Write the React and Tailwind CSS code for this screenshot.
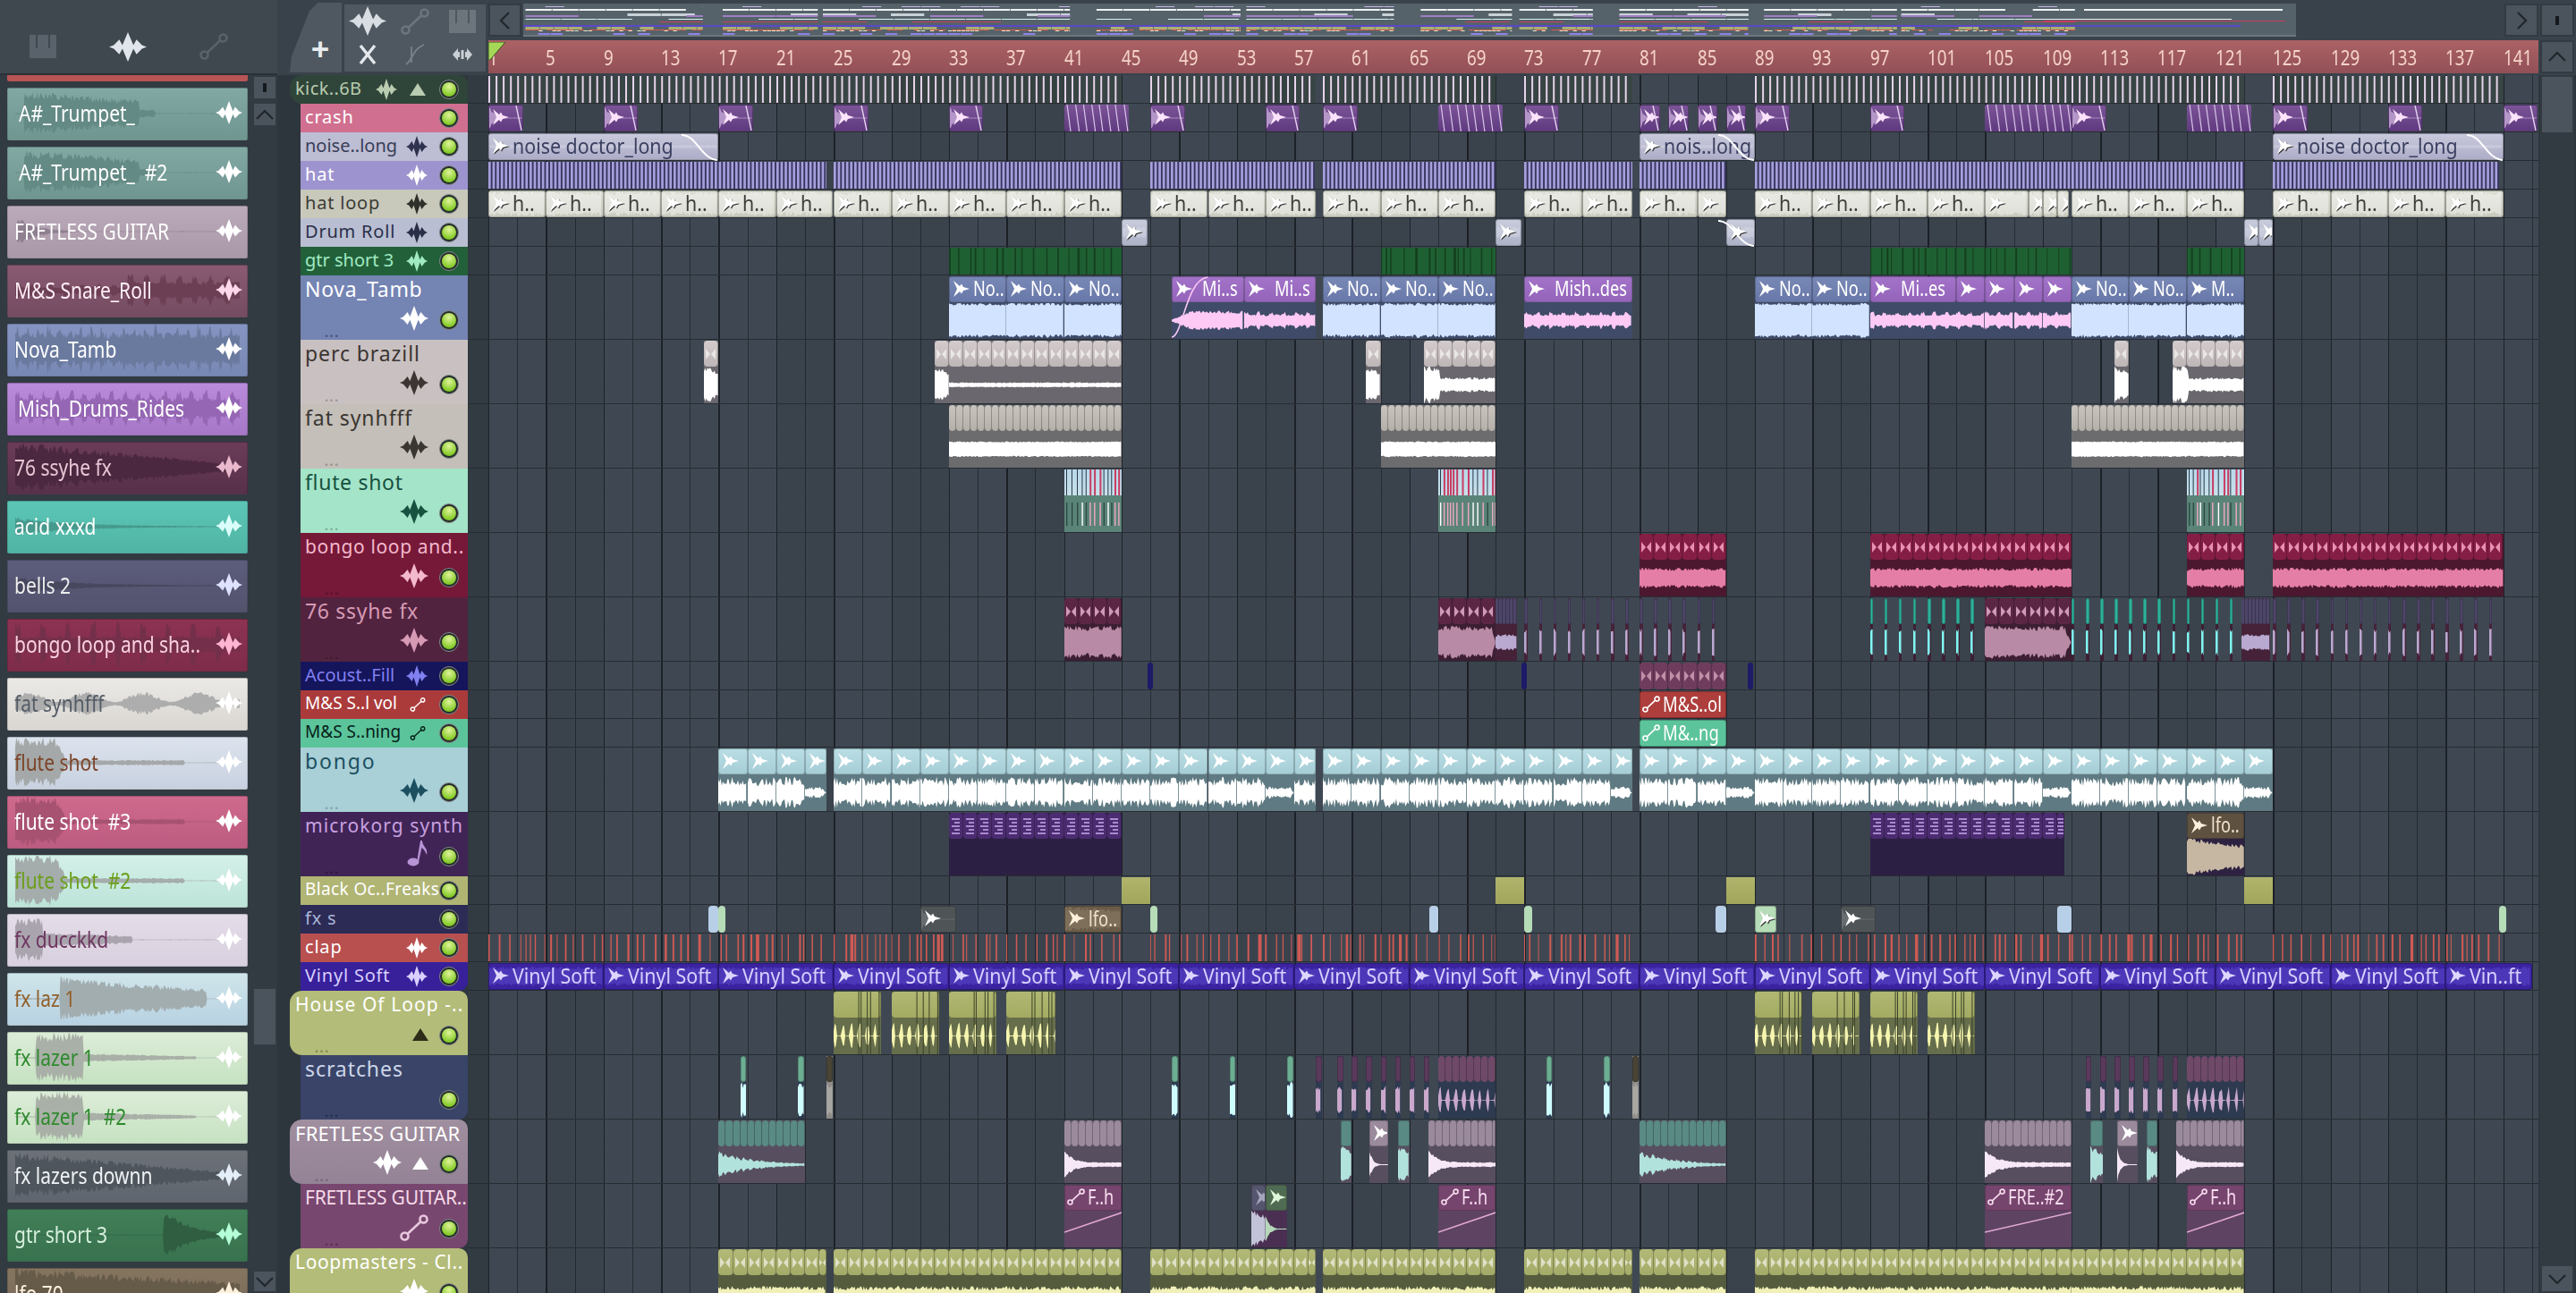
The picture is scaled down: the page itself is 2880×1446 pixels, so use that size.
import { Fragment } from 'react';

const BAR = 16.09;

function rng(seed) {
  let s = (seed * 7919 + 13) >>> 0;
  return () => {
    s = (s + 0x6d2b79f5) >>> 0;
    let t = Math.imul(s ^ (s >>> 15), 1 | s);
    t = (t + Math.imul(t ^ (t >>> 7), 61 | t)) ^ t;
    return ((t ^ (t >>> 14)) >>> 0) / 4294967296;
  };
}

function wavePath(w, h, amp, seed, jitter = 0.25) {
  const r = rng(seed);
  const top = [];
  const bot = [];
  const mid = h / 2;
  for (let x = 0; x <= w; x += 1.3) {
    const a = amp(x / w, x) * (1 - jitter + jitter * r() * 1.4);
    top.push(`${x.toFixed(1)} ${(mid - (a * h) / 2).toFixed(1)}`);
    bot.unshift(`${x.toFixed(1)} ${(mid + (a * h) / 2 * (0.9 + r() * 0.1)).toFixed(1)}`);
  }
  return `M${top.join('L')}L${bot.join('L')}Z`;
}

// ---------- icons ----------
function StarIcon({ w = 24, h = 24, className }) {
  return (
    <svg width={w} height={h} viewBox="0 0 24 24" preserveAspectRatio="none" className={`shrink-0 ${className}`}>
      <path d="M0 12 L3 10.5 L6.5 6 L8.5 10.5 L12 0 L15.5 10.5 L17.5 6 L21 10.5 L24 12 L21 13.5 L17.5 18 L15.5 13.5 L12 24 L8.5 13.5 L6.5 18 L3 13.5 Z" />
    </svg>
  );
}

function SampleIcon({ className }) {
  return (
    <svg width="20" height="18" viewBox="0 0 20 18" className={className}>
      <path d="M1 0 L8 6 L10 3.500 L12 7 L19 9 L12 11 L10 14.500 L8 12 L1 18 L5 9 Z" />
    </svg>
  );
}

function AutoIcon({ w = 32, h = 30, className }) {
  return (
    <svg width={w} height={h} viewBox="0 0 32 30" fill="none" strokeWidth="2.6" className={`shrink-0 ${className}`}>
      <circle cx="5.5" cy="24.5" r="4" />
      <circle cx="26.5" cy="5.5" r="4" />
      <path d="M9 21.5 L23 8.5" />
    </svg>
  );
}

function PianoIcon({ className }) {
  return (
    <svg width="30" height="26" viewBox="0 0 30 26" className={className}>
      <path d="M0 0 H7 V15 H9 V0 H21 V15 H23 V0 H30 V26 H0 Z" />
    </svg>
  );
}

function Chevron({ up, left, right, className }) {
  const d = up ? 'M1 11 L10 2 L19 11' : left ? 'M11 1 L2 10 L11 19' : right ? 'M2 1 L11 10 L2 19' : 'M1 2 L10 11 L19 2';
  return (
    <svg width={left || right ? 13 : 20} height={left || right ? 20 : 13} viewBox={left || right ? '0 0 13 20' : '0 0 20 13'} fill="none" strokeWidth="2.2" className={className}>
      <path d={d} />
    </svg>
  );
}

function Grip() {
  return <div className="w-[4px] h-[10px] bg-[#15191d]" />;
}

// ---------- wave shapes ----------
const SHAPES = {
  flat: () => 0.92,
  high: () => 0.72,
  mid: () => 0.42,
  low: () => 0.13,
  dip: (t) => (t > 0.9 ? 0.05 : 0.28),
  spike: (t) => 0.98 - t * 0.3,
  percLoud: (t) => (t < 0.22 ? 0.98 : 0.38),
  pink: () => 0.52,
  ride: (t, x) => 0.32 + (x % 14 < 4 ? 0.14 : 0),
  swell: (t) => (t < 0.25 ? 0.06 + t * 1.6 : 0.5),
  body: () => 0.84,
  bodyEnd: (t) => (t > 0.93 ? (1 - t) * 10 : 0.84),
  decay: (t) => 0.8 * Math.exp(-t * 9) + 0.13,
  hit: (t) => Math.max(0.03, 0.9 * Math.exp(-t * 6)),
  sharp: (t) => Math.max(0.05, 0.85 * Math.exp(-t * 2.4) * (0.6 + (t * 60) % 1 * 0.4)),
  lfo: (t) => Math.min(0.98, 0.98 * (1 - t * 0.35)),
  strum: (t, x) => (x % 9 < 3 ? 0.3 + 0.4 * Math.abs(Math.sin(x * 0.7)) : 0.02),
  ground: () => 0.34,
  none: () => 0,
};

const PANEL_SHAPES = {
  trumpet: (t) => (t < 0.04 ? 0.02 : t < 0.62 ? 0.85 * (1 - t * 0.75) * (t < 0.55 ? 1 : 0.3) : 0.012),
  guitar: (t) => (t < 0.01 ? 0 : t < 0.25 ? 0.6 * Math.exp(-t * 12) + 0.012 : 0.012),
  snare: (t, x) => (t < 0.5 ? 0.25 : 0.6) * (x % 18 < 6 ? 1 : 0.55),
  tamb: (t, x) => 0.92 * (x % 12 < 3 ? 1 : 0.66),
  rides: (t, x) => 0.68 * (x % 15 < 5 ? 1 : 0.6),
  ssyhe: (t) => 0.96 - t * 0.85,
  acid: (t) => 0.34 * Math.exp(-t * 4) + 0.012,
  bells: (t) => 0.32 * Math.exp(-t * 4) + 0.012,
  bongo: (t, x) => (x % 28 < 6 ? 0.85 : 0.32),
  fat: (t) => 0.26 + 0.18 * Math.sin(t * 25),
  flute: (t) => (t < 0.22 ? 0.92 * Math.min(1, (0.24 - t) * 16) : t < 0.75 ? 0.1 : 0.012),
  duck: (t) => (t < 0.12 ? 0.8 : t < 0.52 ? 0.3 * (1 - t) : 0.012),
  laz: (t) => (t < 0.2 ? 0.03 : t < 0.85 ? 0.8 - (t - 0.2) * 0.7 : 0.012),
  lazer: (t) => (t < 0.09 ? 0.02 : t < 0.3 ? 0.9 : t < 0.8 ? 0.2 * (1 - t) + 0.02 : 0.012),
  down: (t) => 0.88 * (1 - t * 0.9),
  gtr: (t) => (t < 0.66 ? 0.012 : 0.98 * Math.exp(-(t - 0.66) * 9)),
  lfo: (t) => 0.96 - t * 0.55,
};

// ---------- clips on the playlist ----------
function Box({ s, e, className, children }) {
  return (
    <div className={`absolute ${className}`} style={{ left: (s - 1) * BAR, width: (e - s) * BAR }}>
      {children}
    </div>
  );
}

function Curve({ className }) {
  return (
    <svg width="42" height="30" viewBox="0 0 42 30" fill="none" strokeWidth="2" className={`absolute right-0 top-0 ${className}`}>
      <path d="M2 1 C18 0 24 28 42 29" />
    </svg>
  );
}

function Hourglass({ className = 'fill-white/50' }) {
  return (
    <svg width="11" height="14" viewBox="0 0 11 14" className={className}>
      <path d="M0 1 L5 7 L0 13 Z M11 1 L6 7 L11 13 Z" />
    </svg>
  );
}

function MidiMark() {
  return (
    <div className="flex flex-col gap-[2px] w-[9px] items-end">
      <div className="w-full h-[2px] bg-[#a98ad0]" />
      <div className="w-[6px] h-[2px] bg-[#a98ad0]" />
      <div className="w-full h-[2px] bg-[#a98ad0]" />
      <div className="w-[6px] h-[2px] bg-[#a98ad0]" />
      <div className="w-full h-[2px] bg-[#a98ad0]" />
    </div>
  );
}

function Small({ s, e, p, label, squeeze = 'scale-x-[.93]', fade, edge, auto, noIcon, seed = 1, shape = 'mid' }) {
  const w = Math.max(2, (e - s) * BAR);
  return (
    <Box s={s} e={e} className={`top-[1px] h-[30px] rounded-[3px] border border-black/25 ${p.head}`}>
      {p.tint && (
        <svg width={w - 2} height="28" className={`absolute left-0 top-0 ${p.tint}`}>
          <path d={wavePath(w - 2, 28, SHAPES[shape], seed)} />
        </svg>
      )}
      <div className={`relative flex items-center h-full pb-[2px] ${label ? '' : 'overflow-hidden'}`}>
        {!noIcon && (auto ? <AutoIcon w={20} h={19} className={`ml-[2px] ${p.autoStroke || 'stroke-white'}`} /> : <SampleIcon className={`ml-[3px] shrink-0 ${p.iconFill || 'fill-white'}`} />)}
        {label && (
          <span className={`ml-[3px] origin-left ${squeeze} whitespace-nowrap text-[23px] leading-none ${p.fg}`}>{label}</span>
        )}
      </div>
      {fade && <Curve className={p.curve || 'stroke-white'} />}
      {edge && (
        <svg width="8" height="28" fill="none" strokeWidth="1.4" className="absolute right-0 top-0 stroke-[#e3d3ef]">
          <path d="M1 0 L7 28" />
        </svg>
      )}
    </Box>
  );
}

function Slashed({ s, e, seed = 3 }) {
  const w = (e - s) * BAR;
  const r = rng(seed);
  const lines = [];
  for (let x = 3; x < w; x += 8 + r() * 2) lines.push(x);
  return (
    <Box s={s} e={e} className="top-[1px] h-[30px] rounded-[2px] bg-gradient-to-b from-[#7b5497] to-[#603a80]">
      <svg width={w} height="30" fill="none" strokeWidth="1.2" className="stroke-[#d9c6ea]">
        {lines.map((x, i) => <path key={i} d={`M${x} 0 L${x + 4} 30`} />)}
      </svg>
    </Box>
  );
}

function Chunks({ total, size, className, iconClass, noIcon, midi }) {
  const n = Math.ceil(total / size - 0.01);
  return (
    <div className="flex h-full">
      {Array.from({ length: n }, (_, i) => (
        <div key={i} className={`h-full shrink-0 rounded-[4px] border-r border-black/25 flex items-center justify-center overflow-hidden ${className}`} style={{ width: Math.min(size, total - i * size) * BAR }}>
          {midi ? <MidiMark /> : !noIcon && size * BAR > 13 && <Hourglass className={iconClass} />}
        </div>
      ))}
    </div>
  );
}

function Tall({ s, e, p, label, labelCls = 'ml-[3px]', shape = 'flat', chunk, seed = 1, auto, noIcon, jitter, line, fadeCurve, hair }) {
  const w = Math.max(2, (e - s) * BAR);
  const hairs = [];
  if (hair) {
    const r = rng(seed + 40);
    for (let x = w * 0.52; x < w; x += 2 + r() * 8) hairs.push(x);
  }
  return (
    <Box s={s} e={e} className={`top-[1px] h-[70px] flex flex-col ${p.body}`}>
      <div className={`h-[29px] shrink-0 ${chunk ? '' : `rounded-[3px] border border-black/20 ${p.head} flex items-center pb-[2px] ${label ? '' : 'overflow-hidden'}`}`}>
        {chunk ? (
          <Chunks total={e - s} size={chunk} className={p.head} iconClass={p.ghost} noIcon={p.noGhost} midi={p.midi} />
        ) : (
          <>
            {!noIcon && w > 10 && (auto ? <AutoIcon w={20} h={19} className={`ml-[2px] ${p.autoStroke || 'stroke-white'}`} /> : <SampleIcon className={`ml-[3px] shrink-0 ${p.iconFill || 'fill-white'}`} />)}
            {label && <span className={`${labelCls} origin-left scale-x-[.79] whitespace-nowrap text-[23px] leading-none ${p.fg}`}>{label}</span>}
          </>
        )}
      </div>
      <div className="flex-1 relative">
        {line ? (
          <svg width={w} height="41" fill="none" strokeWidth="1.6" className={p.lineStroke}>
            <path d={`M0 24 L${w} 2`} />
          </svg>
        ) : (
          <svg width={w} height="41" className={p.wave}>
            <path d={wavePath(w, 41, SHAPES[shape], seed, jitter)} />
          </svg>
        )}
        {fadeCurve && (
          <svg width={w} height="70" fill="none" strokeWidth="1.6" className={`absolute left-0 top-[-29px] ${p.lineStroke || 'stroke-[#ffc9f5]'}`}>
            <path d={`M0 68 C${w * 0.15} 68 ${w * 0.2} 3 ${w * 0.5} 1`} />
          </svg>
        )}
      </div>
      {hair && (
        <svg width={w} height="70" className="absolute left-0 top-0 fill-[#3b4228]">
          {hairs.map((x, i) => <rect key={i} x={x.toFixed(1)} y="0" width="1" height="70" />)}
        </svg>
      )}
    </Box>
  );
}

// vertical line fields: kick, hat, clap, gtr lanes
function Ticks({ s, e, step, bw, h = 32, fill, bg = '', seed = 1, random }) {
  const w = (e - s) * BAR;
  const r = rng(seed);
  const items = [];
  for (let x = 0; x < w; ) {
    const wd = random ? 0.9 + r() * (r() > 0.85 ? 3 : 1.2) : bw;
    items.push([x, wd]);
    x += random ? step * (0.5 + r() * 1.2) : step;
  }
  return (
    <Box s={s} e={e} className={`top-[1px] ${bg}`}>
      <svg width={w} height={h - 2} className={`block ${fill}`}>
        {items.map(([x, wd], i) => <rect key={i} x={x.toFixed(1)} y="0" width={wd.toFixed(1)} height={h - 2} />)}
      </svg>
    </Box>
  );
}

function Flute({ s, e, seed = 4 }) {
  const w = (e - s) * BAR;
  const r = rng(seed);
  const lines = [];
  for (let x = 2; x < w; x += 3 + r() * 4) lines.push([x, r()]);
  return (
    <Box s={s} e={e} className="top-[1px] h-[70px] flex flex-col">
      <svg width={w} height="29" className="block bg-[linear-gradient(#b9d7ea,#c8e2ec)]">
        {lines.map(([x, c], i) => <rect key={i} x={x} y="0" width={c > 0.6 ? 2 : 1} height="29" className={c > 0.6 ? 'fill-[#c83c62]' : 'fill-[#2a3a48]'} />)}
      </svg>
      <svg width={w} height="41" className="block bg-[#5b8478]">
        {lines.map(([x, c], i) => <rect key={i} x={x} y="8" width="1.4" height="26" className={c > 0.6 ? 'fill-[#f0a8c0]' : c > 0.3 ? 'fill-white' : 'fill-[#2c4a44]'} />)}
      </svg>
    </Box>
  );
}

// ---------- palettes ----------
const CRASH = { head: 'bg-gradient-to-b from-[#7b5497] to-[#603a80]', fg: 'text-white', iconFill: 'fill-[#fbe4fb]', tint: 'fill-[#b497c8]' };
const NOISE = { head: 'bg-gradient-to-b from-[#c9c9dc] to-[#adadc8]', fg: 'text-[#3b4060]', iconFill: 'fill-white drop-shadow-[1px_1px_0_#333]', tint: 'fill-white/20' };
const HATL = { head: 'bg-gradient-to-b from-[#dcddd3] to-[#c8cabd]', fg: 'text-[#3c3e38]', iconFill: 'fill-white drop-shadow-[1px_1px_0_#333]', tint: 'fill-white/40' };
const DRUM = { head: 'bg-gradient-to-b from-[#c8ccdc] to-[#aeb2c8]', fg: 'text-[#333]', iconFill: 'fill-white drop-shadow-[1px_1px_0_#333]', tint: 'fill-white/20' };
const NOVA = { head: 'bg-gradient-to-b from-[#7888b6] to-[#6878a8]', body: 'bg-[#3f4b68]', wave: 'fill-[#d2e3ff]', fg: 'text-white', iconFill: 'fill-white' };
const MISH = { head: 'bg-gradient-to-b from-[#a273c8] to-[#9464ba]', body: 'bg-[#3f4b68]', wave: 'fill-[#ffc9f5]', fg: 'text-white', iconFill: 'fill-white', lineStroke: 'stroke-[#ffc9f5]' };
const PERC = { head: 'bg-gradient-to-b from-[#d4cccc] to-[#bdb5b6]', body: 'bg-[#6a686e]', wave: 'fill-white', ghost: 'fill-white/60' };
const FAT = { head: 'bg-gradient-to-b from-[#c9c4be] to-[#b4afa9]', body: 'bg-[#6c6c6e]', wave: 'fill-white', noGhost: true };
const BLOOP = { head: 'bg-[#851e45]', body: 'bg-[#4c1830]', wave: 'fill-[#e57ea6]', ghost: 'fill-[#e890b0]' };
const SSY = { head: 'bg-[#5b2644]', body: 'bg-[#3c1f33]', wave: 'fill-[#b98aa5]', ghost: 'fill-[#cf9ab8]' };
const SSYTHIN = { head: 'bg-[#4d4668]', body: 'bg-[#452238]', wave: 'fill-[#b9a8d0]' };
const SSYTEAL = { head: 'bg-[#2fb09a]', body: 'bg-[#3c1f33]', wave: 'fill-[#7ff5f0]' };
const BONGO = { head: 'bg-gradient-to-b from-[#b9dde4] to-[#a6ced6]', body: 'bg-[#5f7a82]', wave: 'fill-white', iconFill: 'fill-white' };
const KORG = { head: 'bg-[#4c2c70]', body: 'bg-[#2c1f44]', wave: 'fill-[#2c1f44]', midi: true };
const LFO = { head: 'bg-[#5e5140]', body: 'bg-[#2e2242]', wave: 'fill-[#c5b7a2]', fg: 'text-[#f2e2cc]', iconFill: 'fill-[#fff0dc]' };
const HOUSE = { head: 'bg-gradient-to-b from-[#b1b873] to-[#a3aa62]', body: 'bg-[#666e4c]', wave: 'fill-[#f5f5ae]', noGhost: true };
const SCR = { head: 'bg-[#6cae92]', body: 'bg-[#2d3a50]', wave: 'fill-[#cffcff]' };
const SCRP = { head: 'bg-[#5a3a5c]', body: 'bg-[#2d3a50]', wave: 'fill-[#c9a8cc]' };
const SCRC = { head: 'bg-[#6f4a68]', body: 'bg-[#2d3a50]', wave: 'fill-[#c9a8cc]', noGhost: true };
const FRT = { head: 'bg-[#5a8a84]', body: 'bg-[#574f60]', wave: 'fill-[#b2e2dc]', noGhost: true, iconFill: 'fill-[#8ab8b0]' };
const FRM = { head: 'bg-[#9a8a9c]', body: 'bg-[#574f60]', wave: 'fill-[#f7e8f7]', noGhost: true, iconFill: 'fill-white' };
const FAUT = { head: 'bg-[#76456e]', body: 'bg-[#5e4363]', lineStroke: 'stroke-[#e3a9d5]', fg: 'text-[#f8dcef]', autoStroke: 'stroke-[#f8dcef]' };
const LOOPM = { head: 'bg-gradient-to-b from-[#b3ba78] to-[#a4ab68]', body: 'bg-[#555c3e]', wave: 'fill-[#f0f0b8]', ghost: 'fill-white/60' };
const VINYL = { head: 'bg-[#3a22a0]', fg: 'text-[#d9d0ff]', iconFill: 'fill-[#ded6ff]', tint: 'fill-[#4c37b8]' };

const range = (a, b, step) => {
  const out = [];
  for (let x = a; x < b - 0.01; x += step) out.push([x, Math.min(x + step, b)]);
  return out;
};

const crash = (s, e = s + 2.4) => <Small s={s} e={e} p={CRASH} shape="hit" edge />;
const nova = (s, e, label = 'No..') => <Tall s={s} e={e} p={NOVA} label={label} shape="flat" seed={s} jitter={0.12} />;
const mish = (s, e, label, fadeCurve) => <Tall s={s} e={e} p={MISH} label={label} labelCls="ml-[10px]" shape={fadeCurve ? 'swell' : 'ride'} seed={s} fadeCurve={fadeCurve} />;
const thinRun = (a, b, p, shape = 'high') => range(a, b, 1).map(([s]) => <Tall s={s} e={s + 0.22} p={p} shape={shape} noIcon seed={s} />);

// ---------- tracks ----------
const TRACKS = [
  { name: 'kick..6B', n: 'text-[20px] tracking-[.02em]', bg: 'bg-[#2f4539]', fg: 'text-[#b9cbb0]', group: true, icon: 'fill-[#b9cbb0]', tri: 'border-b-[#b9cbb0]',
    clips: [[1, 45], [47, 58.5], [59, 71], [73, 80.5], [89, 111], [111, 123], [125, 141]].map(([s, e], i) => <Ticks s={s} e={e} step={8.05} bw={2} fill="fill-[#e6d3ea]" bg="h-[30px] bg-[#2f4030]/40" seed={i} />) },
  { name: 'crash', bg: 'bg-[#d06f8f]', fg: 'text-white',
    clips: [crash(1), crash(9), crash(17), crash(25), crash(33), <Slashed s={41} e={45.5} />, crash(47), crash(55), crash(59), <Slashed s={67} e={71.5} />, crash(73), crash(81, 82.4), crash(83, 84.4), crash(85, 86.4), crash(87, 88.4), crash(89), crash(97), <Slashed s={105} e={111} />, crash(111), <Slashed s={119} e={123.5} />, crash(125), crash(133), crash(141)] },
  { name: 'noise..long', n: 'text-[20px] tracking-normal', bg: 'bg-[#bdbdd3]', fg: 'text-[#383d58]', icon: 'fill-[#2f3350]',
    clips: [<Small s={1} e={17} p={NOISE} label="noise doctor_long" fade seed={2} shape="low" />, <Small s={81} e={89} p={NOISE} label="nois..long" fade seed={3} shape="low" />, <Small s={125} e={141} p={NOISE} label="noise doctor_long" fade seed={4} shape="low" />] },
  { name: 'hat', bg: 'bg-[#9d93cf]', fg: 'text-white', icon: 'fill-white',
    clips: [[1, 24.5], [25, 45], [47, 58.4], [59, 71], [73, 80.5], [81, 87], [89, 111], [111, 123], [125, 140.7]].map(([s, e]) => <Ticks s={s} e={e} step={4.6} bw={2.7} fill="fill-[#a79fdc]" bg="h-[30px] bg-[#37365e]" />) },
  { name: 'hat loop', bg: 'bg-[#c8c8bb]', fg: 'text-[#3b3b34]', icon: 'fill-[#2f302a]',
    clips: [
      ...[[1, 5], [5, 9], [9, 13], [13, 17], [17, 21], [21, 24.9], [25, 29], [29, 33], [33, 37], [37, 41], [41, 45], [47, 51], [51, 55], [55, 58.5], [59, 63], [63, 67], [67, 71], [73, 77], [77, 80.5], [81, 85], [89, 93], [93, 97], [97, 101], [101, 105], [111, 115], [115, 119], [119, 123], [125, 129], [129, 133], [133, 137], [137, 141]].map(([s, e]) => <Small s={s} e={e} p={HATL} label="h.." seed={s} shape="flat" />),
      ...[[85, 87], [105, 108], [108, 109], [109, 110], [110, 110.8]].map(([s, e]) => <Small s={s} e={e} p={HATL} seed={s} shape="flat" />),
    ] },
  { name: 'Drum Roll', bg: 'bg-[#b9bed2]', fg: 'text-[#2a2f48]', icon: 'fill-[#2a2f48]',
    clips: [[45, 46.8], [71, 72.8], [87, 89], [123, 124], [124, 125]].map(([s, e]) => <Small s={s} e={e} p={DRUM} seed={s} fade={s === 87} />) },
  { name: 'gtr short 3', n: 'text-[20px] tracking-normal', bg: 'bg-[#22603a]', fg: 'text-[#a0eac2]', icon: 'fill-[#a0eac2]',
    clips: [[33, 45], [63, 71], [97, 111], [119, 123]].map(([s, e]) => <Ticks s={s} e={e} step={9} random fill="fill-[#14401f]" bg="h-[30px] bg-[#1f6033]" seed={s} />) },
  { name: 'Nova_Tamb', tall: true, bg: 'bg-[#7484b3]', fg: 'text-white', icon: 'fill-white', dots: 'text-[#4a5578]',
    clips: [nova(33, 37), nova(37, 41), nova(41, 45), mish(48.5, 53.5, 'Mi..s', true), mish(53.5, 58.5, 'Mi..s'), nova(59, 63), nova(63, 67), nova(67, 71), mish(73, 80.5, 'Mish..des'), nova(89, 93), nova(93, 97), mish(97, 103, 'Mi..es'), mish(103, 105), mish(105, 107), mish(107, 109), mish(109, 111), nova(111, 115), nova(115, 119), nova(119, 123, 'M..')] },
  { name: 'perc brazill', n: 'text-[23px] tracking-[.04em]', tall: true, bg: 'bg-[#c9c1c1]', fg: 'text-[#3c3533]', icon: 'fill-[#3c3533]', dots: 'text-[#9e9695]',
    clips: [
      <Tall s={16} e={17} p={PERC} chunk={1} shape="spike" seed={7} />,
      <Tall s={32} e={33} p={PERC} chunk={1} shape="spike" seed={8} />,
      <Tall s={33} e={45} p={PERC} chunk={1} shape="low" seed={9} />,
      <Tall s={62} e={63} p={PERC} chunk={1} shape="spike" seed={10} />,
      <Tall s={66} e={71} p={PERC} chunk={1} shape="percLoud" seed={11} />,
      <Tall s={114} e={115} p={PERC} chunk={1} shape="spike" seed={12} />,
      <Tall s={118} e={123} p={PERC} chunk={1} shape="percLoud" seed={13} />,
    ] },
  { name: 'fat synhfff', n: 'text-[23px] tracking-[.04em]', tall: true, bg: 'bg-[#c4bfb9]', fg: 'text-[#3a3631]', icon: 'fill-[#3a3631]', dots: 'text-[#97928c]',
    clips: [[33, 45], [63, 71], [111, 123]].map(([s, e]) => <Tall s={s} e={e} p={FAT} chunk={0.5} shape="mid" seed={s} jitter={0.1} />) },
  { name: 'flute shot', tall: true, bg: 'bg-[#a4e4c9]', fg: 'text-[#17513f]', icon: 'fill-[#17513f]', dots: 'text-[#7bb09b]',
    clips: [<Flute s={41} e={45} seed={4} />, <Flute s={67} e={71} seed={5} />, <Flute s={119} e={123} seed={6} />] },
  { name: 'bongo loop and..', n: 'text-[21px] tracking-[.03em]', tall: true, bg: 'bg-[#761838]', fg: 'text-[#f3b8cc]', icon: 'fill-[#f3b8cc]', dots: 'text-[#5c1029]',
    clips: [[81, 87], [97, 111], [119, 123], [125, 141]].map(([s, e]) => <Tall s={s} e={e} p={BLOOP} chunk={1} shape="pink" seed={s} />) },
  { name: '76 ssyhe fx', tall: true, bg: 'bg-[#52233f]', fg: 'text-[#d79ab4]', icon: 'fill-[#d79ab4]', dots: 'text-[#3e1a2f]',
    clips: [
      <Tall s={41} e={45} p={SSY} chunk={1} shape="body" seed={3} />,
      <Tall s={67} e={71} p={SSY} chunk={1} shape="bodyEnd" seed={4} />,
      <Tall s={105} e={111} p={SSY} chunk={1} shape="bodyEnd" seed={5} />,
      <Tall s={71} e={72.5} p={SSYTHIN} chunk={0.25} shape="mid" seed={6} />,
      <Tall s={122.8} e={124.8} p={SSYTHIN} chunk={0.25} shape="mid" seed={7} />,
      ...thinRun(73, 81, SSYTHIN),
      ...thinRun(81, 87, SSYTHIN),
      ...thinRun(97, 105, SSYTEAL),
      ...thinRun(111, 123, SSYTEAL),
      ...thinRun(125, 141, SSYTHIN),
    ] },
  { name: 'Acoust..Fill', n: 'text-[20px] tracking-normal', bg: 'bg-[#15155c]', fg: 'text-[#8080f0]', icon: 'fill-[#8080f0]',
    clips: [
      ...[46.8, 72.8, 88.5].map((s) => <Box s={s} e={s + 0.35} className="top-[1px] h-[30px] rounded-[3px] bg-[#1e1a68]" />),
      <Box s={81} e={87} className="top-[1px] h-[30px]"><Chunks total={6} size={1} className="bg-[#703c5e]" iconClass="fill-[#c090a8]" /></Box>,
    ] },
  { name: 'M&S S..l vol', n: 'text-[19px] tracking-normal', bg: 'bg-[#ab3b3b]', fg: 'text-white', auto: 'stroke-white',
    clips: [<Small s={81} e={87} p={{ head: 'bg-[#ad3e3c]', fg: 'text-white', autoStroke: 'stroke-white' }} auto label="M&S..ol" squeeze="scale-x-[.8]" />] },
  { name: 'M&S S..ning', n: 'text-[19px] tracking-normal', bg: 'bg-[#5cc49b]', fg: 'text-[#062018]', auto: 'stroke-[#062018]',
    clips: [<Small s={81} e={87} p={{ head: 'bg-[#5cc49b]', fg: 'text-white', autoStroke: 'stroke-white' }} auto label="M&..ng" squeeze="scale-x-[.8]" />] },
  { name: 'bongo', n: 'text-[23px] tracking-[.08em]', tall: true, bg: 'bg-[#a9cfd7]', fg: 'text-[#1c5060]', icon: 'fill-[#1c5060]', dots: 'text-[#7fa3ab]',
    clips: [...range(17, 24.5, 2), ...range(25, 58.5, 2), ...range(59, 80.5, 2), ...range(81, 125, 2)].map(([s, e]) => (
      <Tall s={s} e={e} p={BONGO} shape={[23, 87, 109, 123, 55, 79].includes(s) ? 'dip' : 'high'} seed={s} jitter={0.5} />
    )) },
  { name: 'microkorg synth', n: 'text-[21px] tracking-[.05em]', tall: true, bg: 'bg-[#402456]', fg: 'text-[#c8a0e0]', note: true, dots: 'text-[#2c163e]',
    clips: [
      <Tall s={33} e={45} p={KORG} chunk={1} shape="none" seed={3} />,
      <Tall s={97} e={110.5} p={KORG} chunk={1} shape="none" seed={4} />,
      <Tall s={119} e={123} p={LFO} label="lfo.." shape="lfo" seed={5} />,
    ] },
  { name: 'Black Oc..Freaks', n: 'text-[19px] tracking-[.02em]', bg: 'bg-[#b0b574]', fg: 'text-white',
    clips: [[45, 47], [71, 73], [87, 89], [123, 125]].map(([s, e]) => <Box s={s} e={e} className="top-[1px] h-[30px] bg-gradient-to-b from-[#b0b46c] to-[#a1a65c]" />) },
  { name: 'fx s', bg: 'bg-[#2c2b55]', fg: 'text-[#a9b5d8]',
    clips: [
      ...[[16.3, 17], [66.4, 67], [86.3, 87], [110, 111]].map(([s, e]) => <Box s={s} e={e} className="top-[1px] h-[30px] rounded-[4px] bg-[#b8cfe8]" />),
      ...[[17, 17.5], [47, 47.5], [73, 73.5], [140.7, 141.2]].map(([s, e]) => <Box s={s} e={e} className="top-[1px] h-[30px] rounded-[4px] bg-[#b6dcb8]" />),
      <Small s={89} e={90.5} p={{ head: 'bg-[#b6dcb8]', iconFill: 'fill-white drop-shadow-[1px_1px_0_#333]' }} />,
      <Small s={31} e={33.5} p={{ head: 'bg-[#4f5557]', tint: 'fill-[#666d70]', iconFill: 'fill-white' }} shape="hit" />,
      <Small s={95} e={97.4} p={{ head: 'bg-[#4f5557]', tint: 'fill-[#666d70]', iconFill: 'fill-white' }} shape="hit" />,
      <Small s={41} e={45} p={{ head: 'bg-[#6a5c48]', tint: 'fill-[#7d6f5a]', fg: 'text-[#f2e2cc]', iconFill: 'fill-[#fff0dc]' }} label="lfo.." squeeze="scale-x-[.8]" shape="lfo" />,
    ] },
  { name: 'clap', bg: 'bg-[#b85050]', fg: 'text-white', icon: 'fill-white',
    clips: [[1, 24.4], [25, 45], [47, 58.5], [59, 71], [73, 80.5], [89, 111], [111, 123], [125, 141]].map(([s, e]) => <Ticks s={s} e={e} step={8} random fill="fill-[#cf5a54]" bg="h-[30px]" seed={s} />) },
  { name: 'Vinyl Soft', bg: 'bg-[#38209b]', fg: 'text-[#d9d0ff]', icon: 'fill-[#d9d0ff]', brc: true,
    clips: [...range(1, 137, 8).map(([s, e]) => <Small s={s} e={e} p={VINYL} label="Vinyl Soft" seed={s} shape="high" />),
      <Small s={137} e={143} p={VINYL} label="Vin..ft" seed={99} shape="high" />] },
  { name: 'House Of Loop -..', n: 'text-[21px] tracking-[.05em]', tall: true, group: true, bg: 'bg-[#b3bc78]', fg: 'text-white', dots: 'text-[#838a50]', tri: 'border-b-[#2c2c18]',
    clips: [[25, 28.3], [29, 32.3], [33, 36.3], [37, 40.4], [89, 92.3], [93, 96.3], [97, 100.3], [101, 104.3]].map(([s, e]) => <Tall s={s} e={e} p={HOUSE} chunk={e - s} shape="strum" seed={s} hair />) },
  { name: 'scratches', n: 'text-[23px] tracking-[.04em]', tall: true, bg: 'bg-[#394468]', fg: 'text-[#ccd5e8]', dots: 'text-[#26304c]', brc: true,
    clips: [
      ...[18.5, 22.5, 48.5, 52.5, 56.5, 74.5, 78.5].map((s) => <Tall s={s} e={s + 0.42} p={SCR} noIcon shape="flat" seed={s} />),
      ...[58.5, 60, 61, 62, 63, 64, 65, 66, 112, 113, 114, 115, 116, 117, 118].map((s) => <Tall s={s} e={s + 0.4} p={SCRP} noIcon shape="high" seed={s} />),
      ...[24.5, 80.5].map((s) => <Tall s={s} e={s + 0.45} p={{ head: 'bg-[#4a4436]', body: 'bg-[#8e8c88]', wave: 'fill-[#a8a6a0]' }} noIcon shape="flat" seed={s} />),
      <Tall s={67} e={71} p={SCRC} chunk={0.5} shape="strum" seed={5} />,
      <Tall s={119} e={123} p={SCRC} chunk={0.5} shape="strum" seed={6} />,
    ] },
  { name: 'FRETLESS GUITAR', n: 'text-[22px] tracking-[.01em]', tall: true, group: true, bg: 'bg-gradient-to-b from-[#a08f9f] to-[#948296]', fg: 'text-white', icon: 'fill-white', tri: 'border-b-white', dots: 'text-[#75647a]',
    clips: [
      <Tall s={17} e={23} p={FRT} chunk={0.5} shape="sharp" seed={3} />,
      <Tall s={41} e={45} p={FRM} chunk={0.5} shape="decay" seed={4} />,
      <Tall s={60.2} e={61} p={FRT} noIcon shape="lfo" seed={5} />,
      <Tall s={62.2} e={63.5} p={FRM} shape="hit" seed={6} />,
      <Tall s={64.2} e={65} p={FRT} noIcon shape="lfo" seed={7} />,
      <Tall s={66.3} e={71} p={FRM} chunk={0.5} shape="decay" seed={8} />,
      <Tall s={81} e={87} p={FRT} chunk={0.5} shape="sharp" seed={9} />,
      <Tall s={105} e={111} p={FRM} chunk={0.5} shape="decay" seed={10} />,
      <Tall s={112.3} e={113.2} p={FRT} noIcon shape="lfo" seed={11} />,
      <Tall s={114.2} e={115.6} p={FRM} shape="hit" seed={12} />,
      <Tall s={116.2} e={117} p={FRT} noIcon shape="lfo" seed={13} />,
      <Tall s={118.3} e={123} p={FRM} chunk={0.5} shape="decay" seed={14} />,
    ] },
  { name: 'FRETLESS GUITAR..', n: 'text-[21px] tracking-[-.01em]', tall: true, bg: 'bg-[#78476f]', fg: 'text-[#f5dbe9]', auto: 'stroke-[#e8c8df]', dots: 'text-[#5b3154]', brc: true,
    clips: [
      <Tall s={41} e={45} p={FAUT} auto label="F..h" line />,
      <Tall s={67} e={71} p={FAUT} auto label="F..h" line />,
      <Tall s={105} e={111} p={FAUT} auto label="FRE..#2" line />,
      <Tall s={119} e={123} p={FAUT} auto label="F..h" line />,
      <Tall s={54} e={55} p={{ head: 'bg-[#55566e]', body: 'bg-[#4a2f52]', wave: 'fill-[#c2c2d8]', iconFill: 'fill-[#a5a5bc]' }} shape="spike" seed={3} />,
      <Tall s={55} e={56.5} p={{ head: 'bg-[#4f6b52]', body: 'bg-[#4a2f52]', wave: 'fill-[#b4d8b8]', iconFill: 'fill-[#dff5d8]' }} shape="hit" seed={4} />,
    ] },
  { name: 'Loopmasters - Cl..', n: 'text-[21px] tracking-[.03em]', tall: true, group: true, bg: 'bg-[#b3bc78]', fg: 'text-white', icon: 'fill-white',
    clips: [[17, 24.5], [25, 45], [47, 58.5], [59, 71], [73, 80.5], [81, 87], [89, 111], [111, 123]].map(([s, e]) => <Tall s={s} e={e} p={LOOPM} chunk={1} shape="ground" jitter={0.5} seed={s} />) },
];

// ---------- header + lanes ----------
function Led() {
  return (
    <div className="size-[22px] shrink-0 rounded-full bg-[#262b2e] border border-[#7f8a85] flex items-center justify-center">
      <div className="size-[16px] rounded-full bg-[radial-gradient(circle_at_50%_30%,#dff39a,#86cc2a_70%,#5fa016)]" />
    </div>
  );
}

function NoteIcon() {
  return (
    <svg width="24" height="30" viewBox="0 0 24 30" className="shrink-0 fill-[#b893d6]">
      <ellipse cx="7" cy="25" rx="6.5" ry="4.4" />
      <path d="M11 25 L15 1 H17 C17 8 24 9 22 17 C20 12 18 10 16.500 9 L13 25 Z" />
    </svg>
  );
}

function Triangle({ className }) {
  return <div className={`w-0 h-0 shrink-0 border-x-[9px] border-x-transparent border-b-[14px] ${className}`} />;
}

function TrackHeader({ t }) {
  const pos = t.group ? 'ml-0 pl-[6px]' : 'ml-[12px] pl-[5px]';
  const corners = t.group ? 'rounded-tl-[14px] rounded-bl-[14px] rounded-tr-[10px]' : t.brc ? 'rounded-br-[10px]' : '';
  if (t.tall) {
    return (
      <div className={`h-[72px] flex flex-col ${pos} ${corners} ${t.bg}`}>
        <div className={`h-[31px] shrink-0 whitespace-nowrap leading-[28px] pt-[1px] ${t.n || 'text-[23px] tracking-[.03em]'} ${t.fg}`}>{t.name}</div>
        <div className="flex items-start pr-[10px] gap-[12px]">
          <div className={`flex-1 pl-[22px] pt-[26px] text-[14px] leading-none font-bold tracking-[.12em] ${t.dots || 'text-black/20'}`}>...</div>
          {t.note ? <NoteIcon /> : t.auto ? <AutoIcon className={`mt-[3px] ${t.auto}`} /> : t.icon && <StarIcon w={32} h={28} className={`mt-[3px] ${t.icon}`} />}
          {t.tri && <Triangle className={`mt-[11px] ${t.tri}`} />}
          <div className="pt-[8px]"><Led /></div>
        </div>
      </div>
    );
  }
  return (
    <div className={`h-[32px] flex items-center pr-[10px] ${pos} ${corners} ${t.bg}`}>
      <span className={`flex-1 min-w-0 whitespace-nowrap pb-[3px] leading-none ${t.n || 'text-[20px] tracking-[.04em]'} ${t.fg}`}>{t.name}</span>
      {t.icon && <StarIcon w={24} h={24} className={`${t.tri ? 'mr-[14px]' : 'mr-[13px]'} ${t.icon}`} />}
      {t.auto && <AutoIcon w={26} h={16} className={`mr-[11px] ${t.auto}`} />}
      {t.tri && <Triangle className={`mr-[15px] ${t.tri}`} />}
      <Led />
    </div>
  );
}

const LANE_BG = 'bg-[repeating-linear-gradient(90deg,transparent_0,transparent_64.36px,rgba(0,0,0,.08)_64.36px,rgba(0,0,0,.08)_128.72px,transparent_128.72px,transparent_321.8px,rgba(0,0,0,.08)_321.8px,rgba(0,0,0,.08)_386.16px,transparent_386.16px,transparent_450.52px,rgba(0,0,0,.08)_450.52px,rgba(0,0,0,.08)_514.88px),repeating-linear-gradient(90deg,#1d2228_0,#1d2228_1.5px,#3f4852_1.5px,#3f4852_32.2px,#262c33_32.2px,#262c33_33.2px,#3f4852_33.2px,#3f4852_64.36px)]';

function TrackRow({ t }) {
  return (
    <div className={`flex shrink-0 ${t.tall ? 'h-[72px]' : 'h-[32px]'}`}>
      <div className="w-[199px] shrink-0"><TrackHeader t={t} /></div>
      <div className="w-[23px] shrink-0 bg-[#323a42] border-b border-[#262c33]" />
      <div className={`relative w-[2292px] shrink-0 border-b border-[#262c33] ${LANE_BG}`}>
        {t.clips.map((c, i) => <Fragment key={i}>{c}</Fragment>)}
      </div>
    </div>
  );
}

// ---------- overview ----------
const OV_SECTIONS = [[50, 290], [316, 445], [451, 785], [820, 1015], [1022, 1222], [1257, 1381], [1390, 1490], [1525, 1700], [1720, 1900], [1905, 2010], [2010, 2140]];
const OV_ROWS = [
  [3, 1, 'fill-[#c8b8e8]', 0.3, 22], [6, 2, 'fill-[#eef2f4]', 0.95, 30], [11, 3, 'fill-[#c8d2d6]', 0.4, 38],
  [13, 2, 'fill-[#a07fc4]', 0.5, 60], [17, 1, 'fill-[#d8f4f2]', 0.8, 40], [20, 1, 'fill-[#c83c62]', 0.3, 50],
  [26, 3, 'fill-[#a9b074]', 0.7, 16], [29, 1, 'fill-[#e0584e]', 0.8, 6], [30, 1, 'fill-[#e8e8c8]', 0.5, 5], [33, 2, 'fill-[#8f80e8]', 0.4, 14],
];

function Overview() {
  const r = rng(21);
  const rects = [];
  OV_SECTIONS.forEach(([a, b]) => {
    const x0 = a / 1.206 - 39;
    const x1 = b / 1.206 - 39;
    OV_ROWS.forEach(([y, h, cls, p, len]) => {
      for (let x = x0; x < x1; x += len) {
        if (r() < p) rects.push(<rect key={rects.length} x={x.toFixed(1)} y={y} width={(Math.min(len, x1 - x) - 0.7).toFixed(1)} height={h} className={cls} />);
      }
    });
  });
  return (
    <svg width="1982" height="37" className="block shrink-0 bg-[#556269] border-b-2 border-[#6c777c]">
      {rects}
      <rect x="1688" y="17" width="222" height="1" className="fill-[#eef2f4]" />
      <rect x="1745" y="6" width="222" height="2" className="fill-[#eef2f4]" />
      <rect x="1700" y="19" width="270" height="1" className="fill-[#c83c62]" />
      <rect x="0" y="24" width="1920" height="2" className="fill-[#5a48c8]" />
    </svg>
  );
}

// ---------- channel panel ----------
const CHANNELS = [
  { name: 'A#_Trumpet_', bg: 'from-[#82a8a3] to-[#6f9690]', wave: 'fill-[#648a85]', fg: 'text-white', shape: 'trumpet', inset: 'pl-[12px]' },
  { name: 'A#_Trumpet_  #2', bg: 'from-[#82a8a3] to-[#6f9690]', wave: 'fill-[#648a85]', fg: 'text-white', shape: 'trumpet', inset: 'pl-[12px]' },
  { name: 'FRETLESS GUITAR', bg: 'from-[#bbaab9] to-[#a999a8]', wave: 'fill-[#8f8090]', fg: 'text-white', shape: 'guitar' },
  { name: 'M&S Snare_Roll', bg: 'from-[#8a5a72] to-[#744c62]', wave: 'fill-[#6c3f55]', fg: 'text-[#ffeef5]', shape: 'snare', star: 'fill-[#ffd7ea]' },
  { name: 'Nova_Tamb', bg: 'from-[#8594c2] to-[#7888b4]', wave: 'fill-[#6a7a9f]', fg: 'text-white', shape: 'tamb' },
  { name: 'Mish_Drums_Rides', bg: 'from-[#b98bda] to-[#a677c6]', wave: 'fill-[#9566b4]', fg: 'text-white', shape: 'rides', inset: 'pl-[11px]' },
  { name: '76 ssyhe fx', bg: 'from-[#6b3c57] to-[#57304a]', wave: 'fill-[#4c2840]', fg: 'text-[#e9c6d4]', shape: 'ssyhe', star: 'fill-[#e9b8cc]' },
  { name: 'acid xxxd', bg: 'from-[#5cc6b6] to-[#50b4a4]', wave: 'fill-[#46998c]', fg: 'text-white', shape: 'acid', star: 'fill-[#dafffb]' },
  { name: 'bells 2', bg: 'from-[#5c5c7c] to-[#53536e]', wave: 'fill-[#47475e]', fg: 'text-[#eeeeee]', shape: 'bells', star: 'fill-[#dfe2ff]' },
  { name: 'bongo loop and sha..', bg: 'from-[#8d3252] to-[#7e2c4a]', wave: 'fill-[#74304a]', fg: 'text-[#fbd0e0]', shape: 'bongo', star: 'fill-[#ffb5d2]' },
  { name: 'fat synhfff', bg: 'from-[#ebe9e6] to-[#d9d6d1]', wave: 'fill-[#adadad]', fg: 'text-[#545c66]', shape: 'fat' },
  { name: 'flute shot', bg: 'from-[#dce3ed] to-[#c8d1e0]', wave: 'fill-[#a4a8a8]', fg: 'text-[#7d452a]', shape: 'flute' },
  { name: 'flute shot  #3', bg: 'from-[#cf6a8c] to-[#bc5c80]', wave: 'fill-[#a85272]', fg: 'text-white', shape: 'flute' },
  { name: 'flute shot  #2', bg: 'from-[#d4f0e8] to-[#bce4d8]', wave: 'fill-[#a4acac]', fg: 'text-[#6b9e1a]', shape: 'flute' },
  { name: 'fx ducckkd', bg: 'from-[#e5dce9] to-[#d8d0de]', wave: 'fill-[#aaa4ae]', fg: 'text-[#6e3660]', shape: 'duck' },
  { name: 'fx laz 1', bg: 'from-[#cfe5ea] to-[#b8d2e2]', wave: 'fill-[#a2adb0]', fg: 'text-[#92602a]', shape: 'laz' },
  { name: 'fx lazer 1', bg: 'from-[#dcecd8] to-[#c6e2c2]', wave: 'fill-[#a9b0a7]', fg: 'text-[#2e8a2e]', shape: 'lazer' },
  { name: 'fx lazer 1  #2', bg: 'from-[#dcecd8] to-[#c6e2c2]', wave: 'fill-[#a9b0a7]', fg: 'text-[#2e8a2e]', shape: 'lazer' },
  { name: 'fx lazers downn', bg: 'from-[#6c7178] to-[#5f656e]', wave: 'fill-[#4e555c]', fg: 'text-[#f0f3f6]', shape: 'down', star: 'fill-[#e4eef8]' },
  { name: 'gtr short 3', bg: 'from-[#417f58] to-[#38724e]', wave: 'fill-[#2f5e41]', fg: 'text-[#d7efdd]', shape: 'gtr', star: 'fill-[#b4ffd8]' },
  { name: 'lfo 70', bg: 'from-[#85755f] to-[#75685a]', wave: 'fill-[#665a48]', fg: 'text-[#fff1df]', shape: 'lfo', star: 'fill-[#fff0dc]' },
];

function Channel({ c, i }) {
  return (
    <div className={`relative h-[59px] w-[269px] shrink-0 overflow-hidden rounded-[2px] border border-black/15 bg-gradient-to-b ${c.bg}`}>
      <svg width="269" height="59" className={`absolute left-0 top-0 ${c.wave}`}>
        <g transform="translate(8 0)">
          <path d={wavePath(252, 56, PANEL_SHAPES[c.shape], i + 2, 0.3)} />
        </g>
      </svg>
      <div className={`relative h-full flex items-center pl-[7px] pr-[5px] pb-[3px] ${c.inset || ''}`}>
        <span className={`flex-1 min-w-0 origin-left scale-x-[.84] whitespace-pre text-[25px] leading-none ${c.fg}`}>{c.name}</span>
        <StarIcon w={30} h={26} className={c.star || 'fill-white'} />
      </div>
    </div>
  );
}

function NavButton({ className, children }) {
  return (
    <div className={`flex items-center justify-center shrink-0 bg-[#4b545c] border-2 border-[#333a41] ${className}`}>{children}</div>
  );
}

export default function App() {
  return (
    <div className="flex w-[2880px] h-[1446px] overflow-hidden bg-[#39424a] font-['Noto_Sans',sans-serif]">
      {/* channel panel */}
      <div className="w-[310px] shrink-0 flex flex-col">
        <div className="h-[84px] shrink-0 flex items-center justify-around pt-[22px] pl-[4px] pr-[26px] bg-[#3f474f] border-b-2 border-[#2a3036]">
          <PianoIcon className="fill-[#59626a]" />
          <StarIcon w={42} h={33} className="fill-[#dfe5ea]" />
          <AutoIcon className="stroke-[#59626a]" />
        </div>
        <div className="flex-1 flex min-h-0">
          <div className="w-[282px] shrink-0 pl-[8px] flex flex-col gap-[7px] overflow-hidden bg-[#323a42]">
            <div className="h-[7px] w-[269px] shrink-0 rounded-b-[2px] bg-[#b85555]" />
            {CHANNELS.map((c, i) => <Channel key={i} c={c} i={i} />)}
          </div>
          <div className="w-[28px] shrink-0 flex flex-col gap-[2px] bg-[#333b42]">
            <NavButton className="h-[28px]"><Grip /></NavButton>
            <NavButton className="h-[28px]"><Chevron up className="stroke-[#20262b]" /></NavButton>
            <div className="flex-1" />
            <NavButton className="h-[66px]" />
            <div className="h-[246px] shrink-0" />
            <NavButton className="h-[26px]"><Chevron className="stroke-[#20262b]" /></NavButton>
          </div>
        </div>
      </div>

      {/* playlist */}
      <div className="flex-1 min-w-0 flex flex-col bg-[#2e363d]">
        <div className="h-[84px] shrink-0 flex bg-[#39424a]">
          <div className="w-[14px] shrink-0" />
          <div className="w-[58px] shrink-0 mt-[3px] h-[78px] bg-[#4f5860] [clip-path:polygon(0_100%,3%_78%,38%_12%,54%_0,100%_0,100%_100%)] flex items-end justify-center pl-[10px] pb-[4px]">
            <span className="text-[36px] leading-[44px] font-bold text-[#e8ecef]">+</span>
          </div>
          <div className="w-[2px] shrink-0" />
          <div className="w-[160px] shrink-0 mt-[4px] h-[77px] bg-[#4f5860] border border-[#3a4148] grid grid-cols-3 grid-rows-2 place-items-center">
            <StarIcon w={42} h={33} className="fill-[#d7dde2]" />
            <AutoIcon className="stroke-[#6d757c]" />
            <PianoIcon className="fill-[#6d757c]" />
            <svg width="20" height="22" viewBox="0 0 20 22" fill="none" strokeWidth="3.4" className="stroke-[#e4e8ec]"><path d="M2 1 L18 21 M18 1 L2 21" /></svg>
            <svg width="22" height="24" viewBox="0 0 22 24" fill="none" strokeWidth="1.8" className="stroke-[#79828a]"><path d="M1 23 C8 19 8 6 21 1 M7 3 V21" /></svg>
            <svg width="22" height="16" viewBox="0 0 22 16" className="fill-[#c9cfd4]"><path d="M0 8 L6 1 V5 L8 5 L8 11 L6 11 V15 Z M22 8 L16 1 V5 L14 5 L14 11 L16 11 V15 Z M9.500 3 H12.500 V13 H9.500 Z" /></svg>
          </div>
          <div className="w-[2px] shrink-0" />
          <div className="flex-1 min-w-0 flex flex-col">
            <div className="h-[41px] shrink-0 flex pt-[4px]">
              <NavButton className="w-[37px]"><Chevron left className="stroke-[#20262b]" /></NavButton>
              <div className="w-[2px] shrink-0" />
              <Overview />
              <div className="w-[233px] shrink-0" />
              <NavButton className="w-[38px]"><Chevron right className="stroke-[#20262b]" /></NavButton>
              <div className="w-[2px] shrink-0" />
              <NavButton className="w-[38px]"><Grip /></NavButton>
            </div>
            <div className="flex-1 flex pt-[4px] pb-[2px]">
              <div className="relative w-[2292px] shrink-0 flex bg-gradient-to-b from-[#ab6265] to-[#925057]">
                {range(1, 145, 4).map(([n]) => (
                  <div key={n} className="w-[64.36px] shrink-0 flex items-center">
                    <span className="origin-left scale-x-[.78] text-[24px] leading-none text-[#f5d3c8]">{n}</span>
                  </div>
                ))}
                <svg width="20" height="20" viewBox="0 0 20 20" className="absolute left-0 top-[2px]"><path d="M0 0 H19 L2 20 H0 Z" className="fill-[#a5d858] stroke-[#39521a]" /></svg>
              </div>
              <div className="w-[2px] shrink-0" />
              <NavButton className="w-[38px]"><Chevron up className="stroke-[#20262b]" /></NavButton>
            </div>
          </div>
        </div>

        <div className="flex-1 min-h-0 flex pl-[14px]">
          <div className="flex flex-col w-[2514px] shrink-0 overflow-hidden">
            {TRACKS.map((t, i) => <TrackRow key={i} t={t} />)}
          </div>
          <div className="w-[2px] shrink-0" />
          <div className="w-[38px] shrink-0 flex flex-col bg-[#333b42]">
            <NavButton className="h-[66px]" />
            <div className="flex-1" />
            <NavButton className="h-[32px]"><Chevron className="stroke-[#20262b]" /></NavButton>
          </div>
        </div>
      </div>
    </div>
  );
}
